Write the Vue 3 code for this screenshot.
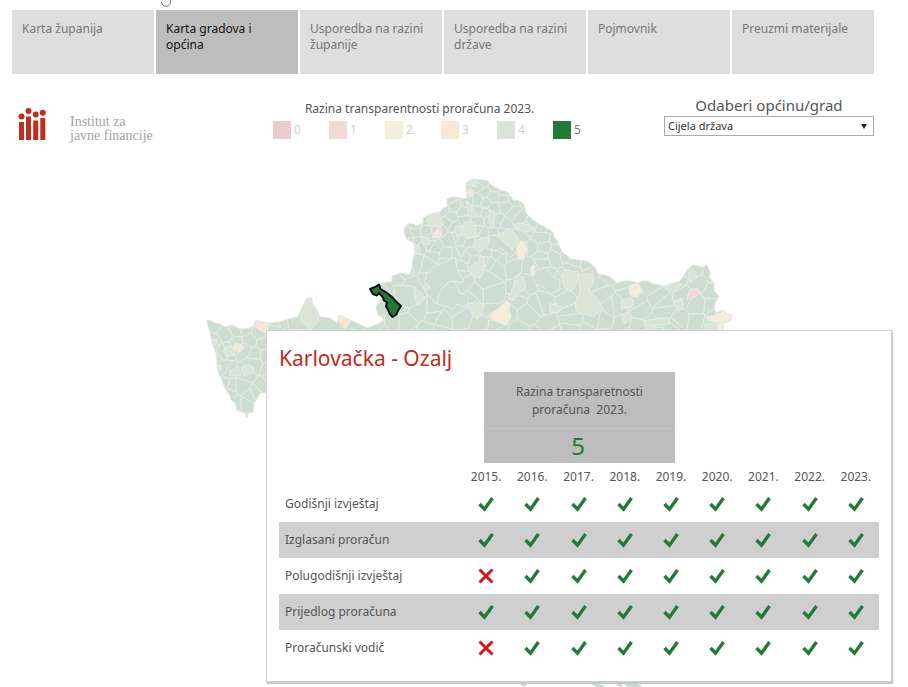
<script setup>
import { ref } from 'vue'

const tabs = [
  'Karta županija',
  'Karta gradova i općina',
  'Usporedba na razini županije',
  'Usporedba na razini države',
  'Pojmovnik',
  'Preuzmi materijale',
]
const activeTab = ref(1)

const levels = [0, 1, 2, 3, 4, 5]
const selectedLevel = 5
const area = ref('Cijela država')

const years = [2015, 2016, 2017, 2018, 2019, 2020, 2021, 2022, 2023]
const reports = [
  { name: 'Godišnji izvještaj', missing: [] },
  { name: 'Izglasani proračun', missing: [] },
  { name: 'Polugodišnji izvještaj', missing: [2015] },
  { name: 'Prijedlog proračuna', missing: [] },
  { name: 'Proračunski vodič', missing: [2015] },
]

const outline =
  'M207 320 211 321 215 323 220 324 225 327 232 325 238 328 243 329 250 328 254 325 256 320 262 322 268 323 280 322 289 319 298 317 301 310 304 304 307 298 312 298 312 303 318 312 320 317 330 318 337 323 339 315 345 318 350 320 357 323 362 326 368 328 375 325 380 323 384 320 382 317 378 315 376 307 380 300 385 298 379 292 381 284 387 282 392 282 392 276 396 275 400 273 405 274 410 275 412 268 412 262 415 253 414 243 410 241 407 239 405 235 404 232 405 227 408 224 413 224 417 226 423 223 423 218 431 214 440 212 443 208 447 207 447 199 452 197 457 197 463 199 467 198 467 193 466 187 466 183 472 179 477 179 482 180 488 181 490 184 495 187 500 190 507 192 510 196 513 200 519 201 523 203 525 208 526 213 533 220 540 225 545 227 553 232 554 237 557 240 560 248 563 253 568 256 570 259 578 260 587 261 595 267 598 274 604 275 610 277 617 283 623 281 630 281 638 283 643 281 648 281 653 284 659 285 665 286 670 284 675 283 680 281 683 277 687 270 693 265 698 266 702 267 707 265 710 272 709 277 714 283 714 291 719 296 715 303 714 309 716 313 723 310 727 314 732 315 730 321 723 323 724 334 700 345 300 345 275 390 266 392 260 393 257 399 254 403 253 412 248 413 247 418 245 413 237 410 235 403 228 393 225 388 222 380 219 374 217 367 217 361 216 353 214 348 212 342 211 337 210 332 208 326Z'

/* Every settlement area is the set of points nearest to its own seat. */
function buildCells() {
  let state = 20231
  const random = () => {
    state = (state * 1664525 + 1013904223) % 4294967296
    return state / 4294967296
  }
  const seats = []
  const scatter = (x0, y0, x1, y1, step) => {
    for (let y = y0; y < y1; y += step) {
      for (let x = x0; x < x1; x += step) {
        seats.push([x + random() * step, y + random() * step])
      }
    }
  }
  scatter(400, 175, 510, 262, 10)
  scatter(510, 175, 570, 262, 13)
  scatter(370, 262, 570, 340, 17)
  scatter(570, 250, 740, 340, 15)
  scatter(200, 310, 270, 425, 13)
  scatter(270, 290, 370, 340, 22)

  return seats.map(([sx, sy]) => {
    const r = 28
    let cell = [[sx - r, sy - r], [sx + r, sy - r], [sx + r, sy + r], [sx - r, sy + r]]
    for (const [ox, oy] of seats) {
      const dx = ox - sx
      const dy = oy - sy
      const far = dx * dx + dy * dy
      if (far === 0 || far > 4 * r * r) continue
      const side = ([x, y]) => (x - (sx + ox) / 2) * dx + (y - (sy + oy) / 2) * dy
      const next = []
      cell.forEach((a, i) => {
        const b = cell[(i + 1) % cell.length]
        const da = side(a)
        const db = side(b)
        if (da <= 0) next.push(a)
        if (da * db < 0) {
          const t = da / (da - db)
          next.push([a[0] + (b[0] - a[0]) * t, a[1] + (b[1] - a[1]) * t])
        }
      })
      cell = next
    }
    return cell.map((p) => p.map((v) => v.toFixed(1)).join(' ')).join(' ')
  })
}
const cells = buildCells()

/* Large areas and those below the top grade, grouped by map sheet; sheets are drawn at three times the size. */
const sheets = [
  {
    x: 195, y: 260,
    areas: [
      ['l4', '315 145 335 115 350 113 352 130 372 158 370 185 348 208 320 186'],
      ['l4', '85 272 98 258 117 260 120 285 95 290'],
      ['l4', '105 332 130 318 137 345 105 348'],
      ['l4', '138 322 158 314 176 322 172 340 145 348'],
      ['l4', '50 240 65 238 68 252 55 255'],
      ['l4', '66 318 80 316 80 327 68 328'],
      ['l3', '178 198 183 181 218 190 222 216 200 216'],
      ['l3', '430 182 433 165 450 176 468 182 462 192 448 205'],
      ['l3', '117 250 135 252 147 262 132 278 118 270'],
    ],
  },
  {
    x: 360, y: 170,
    areas: [
      ['l5', '195 330 200 312 222 290 255 276 285 262 290 290 300 316 312 332 305 338 282 332 265 336 250 352 238 370 230 402 215 385 198 370 210 348 192 335'],
      ['l5', '388 198 410 195 430 212 455 237 468 250 450 262 435 244 420 236 405 242 395 236 382 240 378 228 388 222'],
      ['l5', '230 402 238 368 252 350 268 336 284 334 292 352 300 370 316 375 326 385 322 402 308 410 290 402 280 418 262 410'],
      ['l5', '530 300 560 292 575 318 600 330 598 360 570 372 548 350 528 342 515 322'],
      ['l5', '100 345 150 348 165 352 165 385 172 402 150 415 125 408 108 390'],
      ['l4', '200 148 222 132 238 130 245 160 215 170 203 160'],
      ['l4', '320 92 335 105 352 138 325 140'],
      ['l4', '388 120 403 125 403 165 394 178 386 150'],
      ['l4', '312 157 345 155 350 200 325 205 308 187'],
      ['l4', '285 170 302 165 308 190 290 200'],
      ['l4', '345 212 385 200 388 220 360 245 340 235'],
      ['l4', '410 197 445 178 470 195 475 225 455 237'],
      ['l4', '465 162 490 160 530 175 505 185 470 180'],
      ['l4', '322 295 355 275 362 257 373 262 372 300 360 325 340 318'],
      ['l4', '162 352 185 370 195 385 175 405 165 385'],
      ['l4', '188 348 200 338 210 348 204 360 192 358'],
      ['l4', '325 402 350 395 372 405 365 435 350 447 330 420'],
      ['l4', '470 315 490 320 497 355 480 365 460 392 443 388 460 350'],
      ['l4', '568 410 590 400 600 412 595 430 575 428'],
      ['l4', '183 205 205 200 210 222 190 225'],
      ['l4', '163 230 178 228 182 255 165 250'],
      ['l4', '334 30 352 28 350 48 338 50'],
      ['l3', '323 62 332 57 341 62 340 78 326 80'],
      ['l3', '215 202 230 180 245 183 245 202'],
      ['l1', '232 172 243 168 246 180 235 184'],
      ['l2', '469 235 474 232 480 212 493 215 500 240 490 270 472 265'],
      ['l2', '512 296 520 284 525 288 524 315 512 317'],
      ['l2', '382 438 425 408 438 390 450 400 448 422 453 442 440 465 415 458'],
    ],
  },
  {
    x: 550, y: 220,
    areas: [
      ['l4', '40 150 85 155 85 185 65 215 45 205 35 175'],
      ['l4', '85 165 130 160 130 190 115 210 145 240 160 265 130 290 80 275 75 250 90 215'],
      ['l4', '0 250 40 262 20 278 0 275'],
      ['l4', '215 242 235 235 252 240 245 262 215 265'],
      ['l4', '215 290 240 275 245 290 225 312'],
      ['l4', '285 302 355 292 360 310 320 318 285 320'],
      ['l4', '335 195 360 198 378 184 395 192 370 218'],
      ['l4', '415 155 430 150 440 172 420 190'],
      ['l4', '370 247 395 235 400 260 385 275'],
      ['l4', '465 314 500 308 505 335 465 335'],
      ['l1', '411 239 418 210 443 206 452 220 430 232'],
      ['l2', '237 197 262 190 280 212 262 230 240 225'],
      ['l2', '468 292 498 283 512 280 520 270 528 282 545 282 547 295 540 303 518 308 524 335 505 335 505 306 475 303'],
    ],
  },
]
</script>

<template>
  <main class="page">
    <header class="strip">
      <svg class="strip-mark" viewBox="0 0 12 8" aria-hidden="true">
        <path d="M1.500 2C1.800 5 4 6.400 6.500 6.200C9.500 6 11 3.500 10 0" />
      </svg>
    </header>

    <nav class="tabs">
      <button
        v-for="(tab, i) in tabs"
        :key="tab"
        type="button"
        class="tab"
        :class="{ active: i === activeTab }"
        @click="activeTab = i"
      >{{ tab }}</button>
    </nav>

    <section class="tools">
      <div class="brand">
        <svg class="brand-mark" viewBox="0 0 28 33" aria-hidden="true">
          <circle cx="3.500" cy="8.500" r="3" /><circle cx="10.500" cy="3" r="3" />
          <circle cx="17.700" cy="6.500" r="3" /><circle cx="24.800" cy="4.800" r="3" />
          <path d="M1 14h5V32H1zM8 8.500h5V32H8zM15.200 12.500h5V32h-5zM22.300 10h5V32h-5z" />
        </svg>
        <p class="brand-name">Institut za<br>javne financije</p>
      </div>

      <div class="legend">
        <h2 class="legend-title">Razina transparentnosti proračuna 2023.</h2>
        <ul class="legend-list">
          <li
            v-for="level in levels"
            :key="level"
            class="legend-item"
            :class="{ on: level === selectedLevel }"
          ><span class="swatch" :class="'s' + level"></span>{{ level }}</li>
        </ul>
      </div>

      <div class="picker">
        <label class="picker-label" for="area">Odaberi općinu/grad</label>
        <div class="picker-box">
          <select id="area" v-model="area" class="picker-select">
            <option>Cijela država</option>
            <option>Ozalj</option>
          </select>
          <svg class="picker-arrow" viewBox="0 0 6 5" aria-hidden="true"><path d="M0 0h6L3 5z" /></svg>
        </div>
      </div>
    </section>

    <section class="map">
      <svg class="map-drawing" viewBox="0 150 908 537" aria-hidden="true">
        <defs>
          <clipPath id="land"><path :d="outline" /></clipPath>
        </defs>
        <g clip-path="url(#land)">
          <polygon v-for="(cell, i) in cells" :key="i" class="cell" :points="cell" />
          <g v-for="sheet in sheets" :key="sheet.x" :transform="`translate(${sheet.x} ${sheet.y}) scale(.33333)`">
            <polygon v-for="([kind, points], i) in sheet.areas" :key="i" class="area" :class="kind" :points="points" />
          </g>
        </g>
        <path class="coast" :d="outline" />
        <path class="isle" d="M230 396l3 2 1 4-3-2zM519 683l8 1-3 3zM584 682l14 1 6 3 2 2-9-1-6-3zM615 682l6 2 2 3-5-1zM622 682l12 1 6 2 3 3-14 0z" />
        <path
          class="chosen"
          d="M370 289l5-2 4-2.500 1.500 4.500 6.500 4 5 4 4.500 5 4.500 4-3.500 5.500-1 3-4 2.500-3-3.500-1.500-4-2-3 1-4-3-2-1-3-4-4.500-2 2.500-4-1.500z"
        />
      </svg>

      <article class="card">
        <h1 class="card-title">Karlovačka - Ozalj</h1>
        <div class="score">
          <p class="score-label">Razina transparetnosti<br>proračuna&nbsp; 2023.</p>
          <p class="score-value">5</p>
        </div>
        <table class="reports">
          <thead>
            <tr>
              <td class="name"></td>
              <th v-for="year in years" :key="year" scope="col">{{ year }}.</th>
            </tr>
          </thead>
          <tbody>
            <tr v-for="report in reports" :key="report.name">
              <th class="name" scope="row">{{ report.name }}</th>
              <td v-for="year in years" :key="year">
                <svg v-if="report.missing.includes(year)" class="mark no" viewBox="0 0 16 16" role="img" aria-label="ne">
                  <path d="M1.500 1.500l13 13M14.500 1.500l-13 13" />
                </svg>
                <svg v-else class="mark yes" viewBox="0 0 16 16" role="img" aria-label="da">
                  <path d="M1.500 8L6.500 13.200 14.500 2" />
                </svg>
              </td>
            </tr>
          </tbody>
        </table>
      </article>
    </section>
  </main>
</template>

<style>
body {
  background: #fff;
}
</style>

<style scoped>
.page {
  font-family: "Noto Sans", "Open Sans", sans-serif;
  font-size: 12px;
  line-height: 16px;
  color: #555;
  overflow: hidden;
}
h1, h2, p, ul {
  margin: 0;
  padding: 0;
  font-weight: 400;
}
.strip {
  height: 10px;
  padding-left: 160px;
}
.strip-mark {
  display: block;
  width: 12px;
  height: 8px;
  fill: none;
  stroke: #666;
  stroke-width: 1;
}
.tabs {
  display: grid;
  grid-template-columns: repeat(6, 1fr);
  gap: 2px;
  margin: 0 34px 0 12px;
}
.tab {
  display: flex;
  align-items: flex-start;
  min-height: 64px;
  padding: 11px 10px;
  border: 0;
  background: #dedede;
  color: #767676;
  font: inherit;
  text-align: left;
}
.tab.active {
  background: #bdbdbd;
  color: #111;
}
.tools {
  display: flex;
  justify-content: space-between;
  height: 56px;
  padding: 20px 34px 0 18px;
}
.brand {
  display: flex;
  gap: 24px;
  padding-top: 14px;
}
.brand-mark {
  width: 28px;
  height: 33px;
  fill: #c02d1c;
}
.brand-name {
  padding-top: 7px;
  font-family: "Liberation Serif", serif;
  font-size: 14px;
  line-height: 14px;
  color: #a3a3a5;
}
.legend {
  width: 336px;
  padding: 7px 0 0 65px;
}
.legend-title {
  padding-left: 32px;
  font-size: 12px;
}
.legend-list {
  display: grid;
  grid-template-columns: repeat(6, 1fr);
  padding-top: 4px;
  list-style: none;
}
.legend-item {
  display: flex;
  align-items: center;
  gap: 3px;
  height: 18px;
  line-height: 18px;
  color: #d0d0d0;
}
.legend-item.on {
  color: #777;
}
.swatch {
  width: 18px;
  height: 18px;
}
.s0 { background: #eecccd; }
.s1 { background: #f3d9d6; }
.s2 { background: #f6eedb; }
.s3 { background: #f7e8d7; }
.s4 { background: #dae5d9; }
.s5 { background: #217a37; }
.picker {
  width: 210px;
}
.picker-label {
  display: block;
  font-size: 15px;
  line-height: 22px;
  text-align: center;
}
.picker-box {
  display: flex;
  align-items: center;
  position: relative;
}
.picker-select {
  width: 100%;
  height: 20px;
  padding: 0 3px;
  border: 1px solid #aaa;
  border-radius: 0;
  background: #fff;
  color: #333;
  font: inherit;
  font-size: 11px;
  appearance: none;
}
.picker-arrow {
  position: absolute;
  right: 7px;
  width: 6px;
  height: 5px;
  fill: #222;
  pointer-events: none;
}
.map {
  position: relative;
}
.map-drawing {
  display: block;
  width: 100%;
}
.cell {
  fill: #cdddd2;
  stroke: #e3ebe3;
  stroke-width: 1;
}
.area {
  stroke: #e6ece4;
  stroke-width: 3;
  stroke-linejoin: round;
}
.l1 { fill: #f2d5d5; }
.l2 { fill: #f5eddb; }
.l3 { fill: #f6e7d5; }
.l4 { fill: #dae5d6; }
.l5 { fill: #cdddd2; }
.coast {
  fill: none;
  stroke: #dde7df;
  stroke-width: 1;
}
.isle {
  fill: #c9dbce;
}
.chosen {
  fill: #217a37;
  stroke: #0d0d0d;
  stroke-width: 2;
  stroke-linejoin: round;
}
.card {
  position: absolute;
  top: 180px;
  left: 266px;
  right: 16px;
  padding: 13px 12px 15px;
  border: 1px solid #d0d0d0;
  background: #fff;
  box-shadow: 1px 2px 1px #c8c8c8;
}
.card-title {
  font-size: 21px;
  line-height: 28px;
  color: #c02d1c;
}
.score {
  width: 191px;
  margin-left: 205px;
  background: #bdbdbd;
  text-align: center;
}
.score-label {
  padding: 11px 0 9px;
  border-bottom: 1px solid #c4c4c4;
  line-height: 18px;
}
.score-value {
  padding-right: 3px;
  font-size: 24px;
  line-height: 34px;
  color: #217a37;
}
.reports {
  width: 100%;
  table-layout: fixed;
  border-collapse: collapse;
}
.reports th,
.reports td {
  height: 36px;
  padding: 0;
  font-weight: 400;
  text-align: center;
  vertical-align: middle;
}
.reports thead th,
.reports thead td {
  height: 18px;
  padding-top: 5px;
}
.reports .name {
  width: 178px;
  padding-left: 6px;
  text-align: left;
}
.reports tbody tr:nth-child(even) {
  background: #cfcfcf;
}
.mark {
  display: block;
  width: 16px;
  height: 16px;
  margin: 0 auto;
  fill: none;
}
.yes {
  stroke: #217a37;
  stroke-width: 3.4;
}
.no {
  stroke: #d4151b;
  stroke-width: 3;
}
</style>
